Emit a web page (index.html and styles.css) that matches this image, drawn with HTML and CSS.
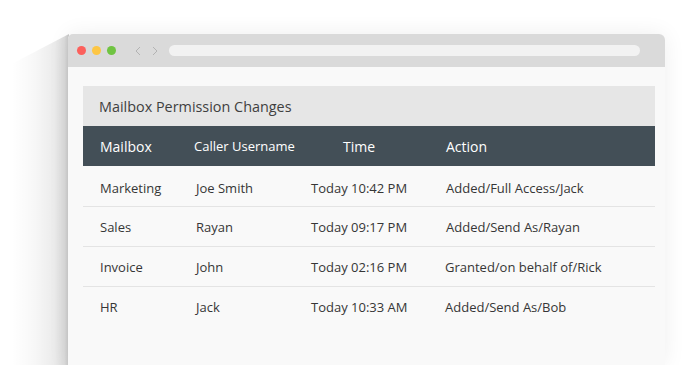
FILE: index.html
```html
<!DOCTYPE html>
<html lang="en">
<head>
<meta charset="utf-8">
<title>Mailbox Permission Changes</title>
<link rel="stylesheet" href="styles.css">
</head>
<body>
<div class="stage">
  <div class="side-shadow"></div>
  <div class="window">
    <div class="titlebar">
      <span class="dot dot-red"></span>
      <span class="dot dot-yellow"></span>
      <span class="dot dot-green"></span>
      <svg class="chev chev-left" width="6" height="10" viewBox="0 0 6 10"><path d="M5 1 L1 5 L5 9" fill="none" stroke="#b3b3b3" stroke-width="1"/></svg>
      <svg class="chev chev-right" width="6" height="10" viewBox="0 0 6 10"><path d="M1 1 L5 5 L1 9" fill="none" stroke="#b3b3b3" stroke-width="1"/></svg>
      <div class="address"></div>
    </div>
    <div class="content">
      <div class="panel">
        <div class="panel-title">Mailbox Permission Changes</div>
        <div class="thead">
          <div class="c1">Mailbox</div>
          <div class="c2 small">Caller Username</div>
          <div class="c3">Time</div>
          <div class="c4">Action</div>
        </div>
        <div class="row">
          <div class="c1">Marketing</div>
          <div class="c2">Joe Smith</div>
          <div class="c3">Today 10:42 PM</div>
          <div class="c4">Added/Full Access/Jack</div>
        </div>
        <div class="row">
          <div class="c1">Sales</div>
          <div class="c2">Rayan</div>
          <div class="c3">Today 09:17 PM</div>
          <div class="c4">Added/Send As/Rayan</div>
        </div>
        <div class="row">
          <div class="c1">Invoice</div>
          <div class="c2">John</div>
          <div class="c3">Today 02:16 PM</div>
          <div class="c4 shift">Granted/on behalf of/Rick</div>
        </div>
        <div class="row">
          <div class="c1">HR</div>
          <div class="c2">Jack</div>
          <div class="c3">Today 10:33 AM</div>
          <div class="c4 shift">Added/Send As/Bob</div>
        </div>
      </div>
    </div>
  </div>
</div>
</body>
</html>
```

FILE: styles.css
```css
html, body {
  margin: 0;
  padding: 0;
  background: #ffffff;
}

body {
  width: 694px;
  height: 365px;
  overflow: hidden;
  font-family: "Open Sans", "Liberation Sans", sans-serif;
}

.stage {
  position: relative;
  width: 694px;
  height: 365px;
  padding-top: 34px;
  box-sizing: border-box;
}

.side-shadow {
  position: absolute;
  left: 12px;
  top: 34px;
  width: 57px;
  height: 331px;
  clip-path: polygon(100% 0, 100% 100%, 0 100%, 0 9%);
  background: linear-gradient(to right,
    rgba(0, 0, 0, 0) 0%,
    rgba(0, 0, 0, 0.03) 40%,
    rgba(0, 0, 0, 0.08) 75%,
    rgba(0, 0, 0, 0.14) 92%,
    rgba(0, 0, 0, 0.22) 100%);
}

.window {
  position: relative;
  margin-left: 68px;
  width: 597px;
  height: 331px;
  background: #f9f9f9;
  border-radius: 5px 6px 0 0;
  box-shadow: 0 0 22px rgba(0, 0, 0, 0.07);
  overflow: hidden;
}

.titlebar {
  height: 33px;
  background: #dadada;
  display: flex;
  align-items: center;
  padding-left: 9px;
  box-sizing: border-box;
}

.dot {
  width: 9px;
  height: 9px;
  border-radius: 50%;
  margin-right: 6px;
  flex: none;
}
.dot-red { background: #fc605c; }
.dot-yellow { background: #fdc644; }
.dot-green { background: #70c442; }

.chev {
  flex: none;
  display: block;
}
.chev-left { margin-left: 13px; }
.chev-right { margin-left: 11px; }

.address {
  margin-left: 11px;
  flex: 1;
  height: 11px;
  margin-right: 25px;
  border-radius: 6px;
  background: #f2f2f2;
}

.content {
  padding: 19px 10px 0 15px;
}

.panel-title {
  height: 40px;
  background: #e6e6e6;
  display: flex;
  align-items: center;
  padding-left: 16px;
  font-size: 14.4px;
  color: #3f3f3f;
}

.thead,
.row {
  display: grid;
  grid-template-columns: 94px 117px 96px 1fr;
  align-items: center;
  height: 40px;
  box-sizing: border-box;
  padding-left: 17px;
}

.thead {
  background: #434f57;
  color: #ffffff;
  font-size: 14px;
}

.small { font-size: 13px; }

.row {
  font-size: 13px;
  color: #363636;
  padding-top: 3px;
}

.row .c2 { padding-left: 2px; }

.row + .row {
  border-top: 1px solid #e4e4e4;
  padding-top: 0;
}

.c3 {
  text-align: center;
  white-space: nowrap;
}

.c4 {
  padding-left: 39px;
  white-space: nowrap;
}

.c4.shift { padding-left: 38px; }
```
